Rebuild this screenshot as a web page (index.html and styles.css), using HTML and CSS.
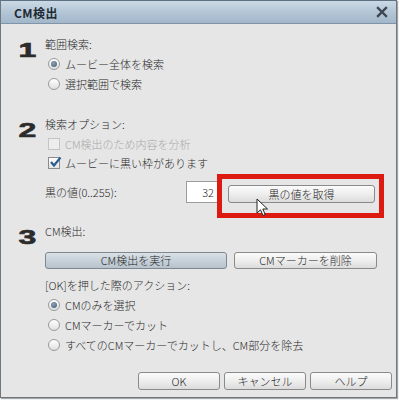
FILE: index.html
```html
<!DOCTYPE html>
<html lang="ja">
<head>
    <meta charset="UTF-8">
    <title>CM検出</title>
    <link rel="stylesheet" href="styles.css">
</head>
<body>
    <div class="window">
        <div class="titlebar">
            <span class="title">CM検出</span>
            <svg class="close" width="12" height="12" viewBox="0 0 12 12">
                <path d="M2 2 L10 10 M10 2 L2 10" stroke="#3d4650" stroke-width="2.4" stroke-linecap="square"/>
            </svg>
        </div>

        <div class="content">
            <div class="step step-1">
                <div class="num">1</div>
                <div class="step-body">
                    <div class="label">範囲検索:</div>
                    <div class="row"><span class="radio checked"></span>ムービー全体を検索</div>
                    <div class="row"><span class="radio"></span>選択範囲で検索</div>
                </div>
            </div>

            <div class="step step-2">
                <div class="num">2</div>
                <div class="step-body">
                    <div class="label">検索オプション:</div>
                    <div class="row disabled"><span class="check"></span>CM検出のため内容を分析</div>
                    <div class="row">
                        <span class="check checked">
                            <svg width="13" height="12" viewBox="0 0 13 12"><path d="M2 6 L5 9.5 L11.5 1.5" fill="none" stroke="#2a5e8e" stroke-width="2.2"/></svg>
                        </span>ムービーに黒い枠があります
                    </div>
                    <div class="value-row">
                        <span class="value-label">黒の値(0..255):</span>
                        <span class="value-input">32</span>
                        <button class="btn btn-get">黒の値を取得</button>
                    </div>
                </div>
            </div>

            <div class="step step-3">
                <div class="num">3</div>
                <div class="step-body">
                    <div class="label">CM検出:</div>
                    <div class="btn-row">
                        <button class="btn btn-run">CM検出を実行</button>
                        <button class="btn btn-del">CMマーカーを削除</button>
                    </div>
                    <div class="label label-ok">[OK]を押した際のアクション:</div>
                    <div class="row row-wide"><span class="radio checked"></span>CMのみを選択</div>
                    <div class="row row-wide"><span class="radio"></span>CMマーカーでカット</div>
                    <div class="row row-wide"><span class="radio"></span>すべてのCMマーカーでカットし、CM部分を除去</div>
                </div>
            </div>

            <div class="footer">
                <button class="btn btn-foot">OK</button>
                <button class="btn btn-foot">キャンセル</button>
                <button class="btn btn-foot">ヘルプ</button>
            </div>
        </div>

        <div class="highlight"></div>
        <svg class="cursor" width="14" height="20" viewBox="0 0 14 20">
            <path d="M1 1 L1 15 L4.5 11.8 L7 17.5 L9.2 16.5 L6.8 11 L11.5 11 Z" fill="#fff" stroke="#222" stroke-width="1" stroke-linejoin="round"/>
        </svg>
    </div>
</body>
</html>
```

FILE: styles.css
```css
* {
    margin: 0;
    padding: 0;
    box-sizing: border-box;
}

body {
    font-family: "Noto Sans CJK JP", "Liberation Sans", sans-serif;
    font-size: 11px;
    font-weight: 300;
    color: #2a2a2a;
    background: #ffffff;
    width: 399px;
    height: 400px;
    overflow: hidden;
}

.window {
    position: relative;
    width: 397px;
    height: 398px;
    background: #e6e6e6;
    border: 1px solid #6d7780;
    border-top-color: #5d7184;
    box-shadow: 1px 1px 1px rgba(0, 0, 0, 0.35);
}

.titlebar {
    height: 23px;
    display: flex;
    align-items: center;
    justify-content: space-between;
    padding: 0 8px 0 13px;
    background: linear-gradient(#cbd9e5 0%, #b3c6d6 50%, #a2b7c9 100%);
    border-bottom: 1px solid #7f94a6;
}

.title {
    font-weight: 700;
    font-size: 12px;
    color: #1f2a33;
    letter-spacing: 0.5px;
}

.close {
    display: block;
}

.content {
    padding-top: 11px;
}

.step {
    display: flex;
}

.num {
    width: 44px;
    padding-left: 11px;
    font-family: "Liberation Sans", sans-serif;
    font-weight: 700;
    font-size: 20px;
    line-height: 19px;
    color: #2b2b2b;
    transform: scaleX(1.6);
    transform-origin: left top;
    margin-top: 6px;
    -webkit-text-stroke: 0.6px #2b2b2b;
}

.step-body {
    flex: 1;
}

.label {
    height: 19px;
    line-height: 19px;
}

.row {
    height: 20px;
    display: flex;
    align-items: center;
    padding-left: 3px;
}

.step-2 .row {
    height: 19px;
}

.row.disabled {
    color: #a9a9a9;
}

.radio {
    width: 12px;
    height: 12px;
    border-radius: 50%;
    border: 1px solid #9a9a9a;
    background: linear-gradient(#ffffff, #e0e0e0);
    margin-right: 5px;
    display: flex;
    align-items: center;
    justify-content: center;
}

.radio.checked::after {
    content: '';
    width: 6px;
    height: 6px;
    border-radius: 50%;
    background: radial-gradient(circle at 40% 35%, #8da3b8, #3f5872);
}

.check {
    width: 12px;
    height: 12px;
    border: 1px solid #c4c4c4;
    background: #ededed;
    margin-right: 5px;
    position: relative;
}

.check.checked {
    border-color: #8c8c8c;
    background: linear-gradient(#ffffff, #e4e4e4);
}

.check svg {
    position: absolute;
    left: 0;
    top: -2px;
}

.value-row {
    display: flex;
    align-items: center;
    margin-top: 9px;
    height: 22px;
}

.value-label {
    width: 141px;
}

.value-input {
    width: 32px;
    height: 22px;
    line-height: 20px;
    border: 1px solid #9c9c9c;
    background: #ffffff;
    text-align: right;
    padding-right: 3px;
    margin-right: 10px;
}

.btn {
    font-family: "Noto Sans CJK JP", "Liberation Sans", sans-serif;
    font-size: 11px;
    font-weight: 300;
    color: #262626;
    height: 18px;
    border: 1px solid #8a8a8a;
    border-radius: 3px;
    background: linear-gradient(#fbfbfb 0%, #eeeeee 50%, #dcdcdc 100%);
    line-height: 15px;
}

.btn-get {
    width: 147px;
    margin-top: 4px;
}

.step-3 {
    margin-top: 19px;
}

.step-2 {
    margin-top: 21px;
}

.btn-row {
    display: flex;
    gap: 7px;
    margin-top: 11px;
}

.btn-run {
    width: 182px;
    height: 17px;
    background: linear-gradient(#dae1e7 0%, #c7d1d9 50%, #b7c3cc 100%);
    border-color: #7d8891;
}

.btn-del {
    width: 143px;
    height: 17px;
}

.label-ok {
    margin-top: 7px;
}

.footer {
    display: flex;
    justify-content: flex-end;
    gap: 4px;
    padding-right: 4px;
    margin-top: 17px;
}

.btn-foot {
    width: 82px;
    height: 18px;
}

.highlight {
    position: absolute;
    left: 216px;
    top: 173px;
    width: 167px;
    height: 44px;
    border: 5px solid #dd1a10;
}

.cursor {
    position: absolute;
    left: 255px;
    top: 197px;
}
```
